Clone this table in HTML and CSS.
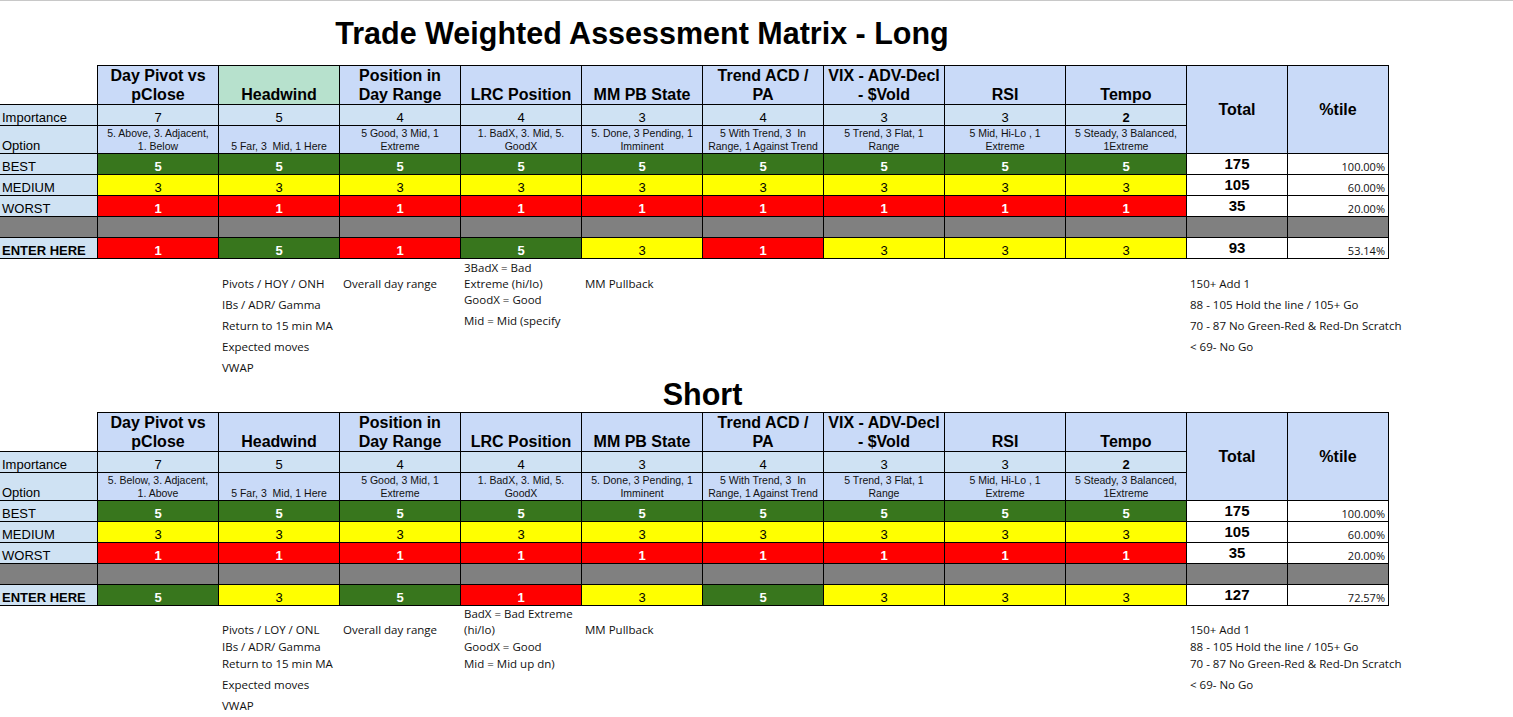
FILE: index.html
```html
<!DOCTYPE html>
<html lang="en">
<head>
<meta charset="utf-8">
<title>Trade Weighted Assessment Matrix</title>
<link rel="stylesheet" href="styles.css">
</head>
<body>
<div class="topline"></div>

<h1 class="title title-long">Trade Weighted Assessment Matrix - Long</h1>

<div class="matrix">
  <div class="cell corner"></div>
  <div class="cell hd">Day Pivot vs<br>pClose</div>
  <div class="cell hd hw">Headwind</div>
  <div class="cell hd">Position in<br>Day Range</div>
  <div class="cell hd">LRC Position</div>
  <div class="cell hd">MM PB State</div>
  <div class="cell hd">Trend ACD /<br>PA</div>
  <div class="cell hd">VIX - ADV-Decl<br>- $Vold</div>
  <div class="cell hd">RSI</div>
  <div class="cell hd">Tempo</div>
  <div class="cell hd span3">Total</div>
  <div class="cell hd span3">%tile</div>

  <div class="cell lbl">Importance</div>
  <div class="cell imp">7</div>
  <div class="cell imp">5</div>
  <div class="cell imp">4</div>
  <div class="cell imp">4</div>
  <div class="cell imp">3</div>
  <div class="cell imp">4</div>
  <div class="cell imp">3</div>
  <div class="cell imp">3</div>
  <div class="cell imp strong">2</div>

  <div class="cell lbl">Option</div>
  <div class="cell opt">5. Above, 3. Adjacent,<br>1. Below</div>
  <div class="cell opt">5 Far, 3&nbsp; Mid, 1 Here</div>
  <div class="cell opt">5 Good, 3 Mid, 1<br>Extreme</div>
  <div class="cell opt">1. BadX, 3. Mid, 5.<br>GoodX</div>
  <div class="cell opt">5. Done, 3 Pending, 1<br>Imminent</div>
  <div class="cell opt">5 With Trend, 3&nbsp; In<br>Range, 1 Against Trend</div>
  <div class="cell opt">5 Trend, 3 Flat, 1<br>Range</div>
  <div class="cell opt">5 Mid, Hi-Lo , 1<br>Extreme</div>
  <div class="cell opt">5 Steady, 3 Balanced,<br>1Extreme</div>

  <div class="cell lbl">BEST</div>
  <div class="cell g">5</div><div class="cell g">5</div><div class="cell g">5</div>
  <div class="cell g">5</div><div class="cell g">5</div><div class="cell g">5</div>
  <div class="cell g">5</div><div class="cell g">5</div><div class="cell g">5</div>
  <div class="cell tv">175</div>
  <div class="cell pv">100.00%</div>

  <div class="cell lbl">MEDIUM</div>
  <div class="cell y">3</div><div class="cell y">3</div><div class="cell y">3</div>
  <div class="cell y">3</div><div class="cell y">3</div><div class="cell y">3</div>
  <div class="cell y">3</div><div class="cell y">3</div><div class="cell y">3</div>
  <div class="cell tv">105</div>
  <div class="cell pv">60.00%</div>

  <div class="cell lbl">WORST</div>
  <div class="cell r">1</div><div class="cell r">1</div><div class="cell r">1</div>
  <div class="cell r">1</div><div class="cell r">1</div><div class="cell r">1</div>
  <div class="cell r">1</div><div class="cell r">1</div><div class="cell r">1</div>
  <div class="cell tv">35</div>
  <div class="cell pv">20.00%</div>

  <div class="cell k"></div>
  <div class="cell k"></div><div class="cell k"></div><div class="cell k"></div>
  <div class="cell k"></div><div class="cell k"></div><div class="cell k"></div>
  <div class="cell k"></div><div class="cell k"></div><div class="cell k"></div>
  <div class="cell k"></div><div class="cell k"></div>

  <div class="cell lbl strong">ENTER HERE</div>
  <div class="cell r">1</div><div class="cell g">5</div><div class="cell r">1</div>
  <div class="cell g">5</div><div class="cell y">3</div><div class="cell r">1</div>
  <div class="cell y">3</div><div class="cell y">3</div><div class="cell y">3</div>
  <div class="cell tv">93</div>
  <div class="cell pv">53.14%</div>
</div>

<div class="notes notes-long">
  <div class="n c3 r1">Pivots / HOY / ONH</div>
  <div class="n c3 r2">IBs / ADR/ Gamma</div>
  <div class="n c3 r3">Return to 15 min MA</div>
  <div class="n c3 r4">Expected moves</div>
  <div class="n c3 r5">VWAP</div>
  <div class="n c4 r1">Overall day range</div>
  <div class="n c5 r1">3BadX = Bad<br>Extreme (hi/lo)</div>
  <div class="n c5 r2 top">GoodX = Good</div>
  <div class="n c5 r3 top">Mid = Mid (specify</div>
  <div class="n c6 r1">MM Pullback</div>
  <div class="n c11 r1">150+ Add 1</div>
  <div class="n c11 r2">88 - 105 Hold the line / 105+ Go</div>
  <div class="n c11 r3">70 - 87 No Green-Red &amp; Red-Dn Scratch</div>
  <div class="n c11 r4">&lt; 69- No Go</div>
</div>

<h2 class="title title-short">Short</h2>

<div class="matrix">
  <div class="cell corner"></div>
  <div class="cell hd">Day Pivot vs<br>pClose</div>
  <div class="cell hd">Headwind</div>
  <div class="cell hd">Position in<br>Day Range</div>
  <div class="cell hd">LRC Position</div>
  <div class="cell hd">MM PB State</div>
  <div class="cell hd">Trend ACD /<br>PA</div>
  <div class="cell hd">VIX - ADV-Decl<br>- $Vold</div>
  <div class="cell hd">RSI</div>
  <div class="cell hd">Tempo</div>
  <div class="cell hd span3">Total</div>
  <div class="cell hd span3">%tile</div>

  <div class="cell lbl">Importance</div>
  <div class="cell imp">7</div>
  <div class="cell imp">5</div>
  <div class="cell imp">4</div>
  <div class="cell imp">4</div>
  <div class="cell imp">3</div>
  <div class="cell imp">4</div>
  <div class="cell imp">3</div>
  <div class="cell imp">3</div>
  <div class="cell imp strong">2</div>

  <div class="cell lbl">Option</div>
  <div class="cell opt">5. Below, 3. Adjacent,<br>1. Above</div>
  <div class="cell opt">5 Far, 3&nbsp; Mid, 1 Here</div>
  <div class="cell opt">5 Good, 3 Mid, 1<br>Extreme</div>
  <div class="cell opt">1. BadX, 3. Mid, 5.<br>GoodX</div>
  <div class="cell opt">5. Done, 3 Pending, 1<br>Imminent</div>
  <div class="cell opt">5 With Trend, 3&nbsp; In<br>Range, 1 Against Trend</div>
  <div class="cell opt">5 Trend, 3 Flat, 1<br>Range</div>
  <div class="cell opt">5 Mid, Hi-Lo , 1<br>Extreme</div>
  <div class="cell opt">5 Steady, 3 Balanced,<br>1Extreme</div>

  <div class="cell lbl">BEST</div>
  <div class="cell g">5</div><div class="cell g">5</div><div class="cell g">5</div>
  <div class="cell g">5</div><div class="cell g">5</div><div class="cell g">5</div>
  <div class="cell g">5</div><div class="cell g">5</div><div class="cell g">5</div>
  <div class="cell tv">175</div>
  <div class="cell pv">100.00%</div>

  <div class="cell lbl">MEDIUM</div>
  <div class="cell y">3</div><div class="cell y">3</div><div class="cell y">3</div>
  <div class="cell y">3</div><div class="cell y">3</div><div class="cell y">3</div>
  <div class="cell y">3</div><div class="cell y">3</div><div class="cell y">3</div>
  <div class="cell tv">105</div>
  <div class="cell pv">60.00%</div>

  <div class="cell lbl">WORST</div>
  <div class="cell r">1</div><div class="cell r">1</div><div class="cell r">1</div>
  <div class="cell r">1</div><div class="cell r">1</div><div class="cell r">1</div>
  <div class="cell r">1</div><div class="cell r">1</div><div class="cell r">1</div>
  <div class="cell tv">35</div>
  <div class="cell pv">20.00%</div>

  <div class="cell k"></div>
  <div class="cell k"></div><div class="cell k"></div><div class="cell k"></div>
  <div class="cell k"></div><div class="cell k"></div><div class="cell k"></div>
  <div class="cell k"></div><div class="cell k"></div><div class="cell k"></div>
  <div class="cell k"></div><div class="cell k"></div>

  <div class="cell lbl strong">ENTER HERE</div>
  <div class="cell g">5</div><div class="cell y">3</div><div class="cell g">5</div>
  <div class="cell r">1</div><div class="cell y">3</div><div class="cell g">5</div>
  <div class="cell y">3</div><div class="cell y">3</div><div class="cell y">3</div>
  <div class="cell tv">127</div>
  <div class="cell pv">72.57%</div>
</div>

<div class="notes notes-short">
  <div class="n c3 r1">Pivots / LOY / ONL</div>
  <div class="n c3 r2">IBs / ADR/ Gamma</div>
  <div class="n c3 r3">Return to 15 min MA</div>
  <div class="n c3 r4">Expected moves</div>
  <div class="n c3 r5">VWAP</div>
  <div class="n c4 r1">Overall day range</div>
  <div class="n c5 r1">BadX = Bad Extreme<br>(hi/lo)</div>
  <div class="n c5 r2">GoodX = Good</div>
  <div class="n c5 r3">Mid = Mid up dn)</div>
  <div class="n c6 r1">MM Pullback</div>
  <div class="n c11 r1">150+ Add 1</div>
  <div class="n c11 r2">88 - 105 Hold the line / 105+ Go</div>
  <div class="n c11 r3">70 - 87 No Green-Red &amp; Red-Dn Scratch</div>
  <div class="n c11 r4">&lt; 69- No Go</div>
</div>
</body>
</html>
```

FILE: styles.css
```css
* {
  box-sizing: border-box;
}

body {
  margin: 0;
  background: #ffffff;
  color: #000000;
  font-family: "Liberation Sans", Arial, sans-serif;
}

.topline {
  height: 1px;
  background: #c8c8c8;
}

.title {
  margin: 0;
  font-family: "Liberation Sans", Arial, sans-serif;
  font-size: 30.5px;
  font-weight: bold;
  text-align: center;
  color: #000000;
}

.title-long {
  height: 64px;
  padding-top: 14px;
  line-height: 37px;
  margin-left: 98px;
  width: 1088px;
}

.title-short {
  height: 36px;
  line-height: 36px;
  margin-left: 219px;
  width: 967px;
}

.matrix {
  display: grid;
  grid-template-columns: 97px repeat(9, 120px) 100px 100px;
  grid-template-rows: 38px 20px 27px repeat(5, 20px);
  gap: 1px;
  padding: 1px 1px 1px 0;
  width: 1389px;
  background: #000000;
}

.cell {
  display: flex;
  align-items: flex-end;
  justify-content: center;
  text-align: center;
  font-size: 13px;
  line-height: 15px;
  background: #ffffff;
  white-space: nowrap;
  overflow: hidden;
}

.corner {
  margin-top: -1px;
  background: #ffffff;
}

.hd {
  background: #c9daf8;
  font-size: 16px;
  line-height: 19px;
  font-weight: bold;
}

.hw {
  background: #b7e1cd;
}

.span3 {
  grid-row: span 3;
  align-items: center;
}

.lbl {
  background: #cfe2f3;
  justify-content: flex-start;
  text-align: left;
  padding-left: 2px;
}

.imp {
  background: #cfe2f3;
}

.opt {
  background: #c9daf8;
  font-size: 10.5px;
  line-height: 13px;
  color: #111111;
}

.strong {
  font-weight: bold;
}

.g {
  background: #38761d;
  color: #ffffff;
  font-weight: bold;
}

.y {
  background: #ffff00;
  color: #000000;
}

.r {
  background: #ff0000;
  color: #ffffff;
  font-weight: bold;
}

.k {
  background: #808080;
}

.tv {
  font-size: 15px;
  line-height: 17px;
  font-weight: bold;
  padding-bottom: 2px;
}

.pv {
  justify-content: flex-end;
  padding-right: 3px;
  font-family: "Open Sans", sans-serif;
  font-size: 11px;
  line-height: 15px;
  color: #111111;
}

.notes {
  display: grid;
  grid-template-columns: 97px repeat(9, 120px) 100px 100px;
  column-gap: 1px;
  width: 1389px;
  font-family: "Open Sans", sans-serif;
  font-size: 11.5px;
  line-height: 16px;
  color: #111111;
}

.notes-long {
  grid-template-rows: 33px 21px 21px 21px 21px;
}

.notes-short {
  grid-template-rows: 32px 17px 17px 21px 21px;
}

.n {
  padding-left: 3px;
  white-space: nowrap;
  align-self: end;
}

.n.top {
  align-self: start;
}

.c3 { grid-column: 3; }
.c4 { grid-column: 4; }
.c5 { grid-column: 5; }
.c6 { grid-column: 6; }
.c11 { grid-column: 11; }

.r1 { grid-row: 1; }
.r2 { grid-row: 2; }
.r3 { grid-row: 3; }
.r4 { grid-row: 4; }
.r5 { grid-row: 5; }
```
